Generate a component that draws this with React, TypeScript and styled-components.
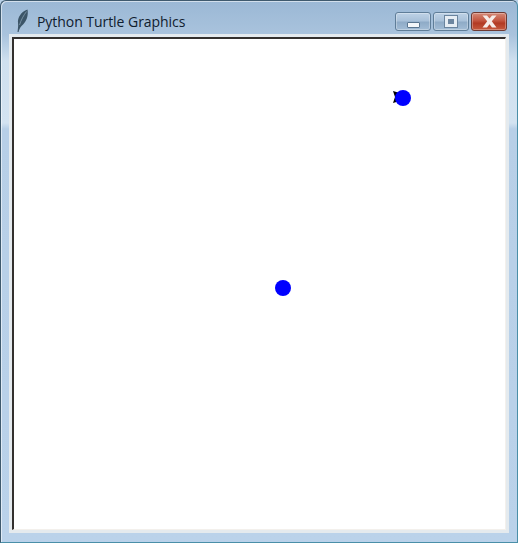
import React from 'react'
import styled, { createGlobalStyle } from 'styled-components'

const GlobalStyle = createGlobalStyle`
  html, body {
    margin: 0;
    padding: 0;
    background: #b9d1e8;
  }
`

const Window = styled.div`
  position: relative;
  box-sizing: border-box;
  width: 518px;
  height: 543px;
  display: flex;
  flex-direction: column;
  overflow: hidden;
  border: 1px solid #3f5a6e;
  border-bottom-color: #4a8fa8;
  border-right-color: #4a8fa8;
  border-radius: 6px 6px 0 0;
  background: linear-gradient(
    to bottom,
    #9bb8d5 0,
    #a9c3dd 34px,
    #cfe0ef 60px,
    #d3e3f1 122px,
    #b7cfe7 128px,
    #bad2ea 100%
  );
  box-shadow: inset 1px 1px 0 rgba(255, 255, 255, 0.55);
`

const TitleBar = styled.div`
  height: 33px;
  flex: none;
  display: flex;
  align-items: flex-start;
  padding: 0 10px 0 14px;
`

const Feather = styled.svg`
  width: 14px;
  height: 24px;
  flex: none;
  margin-top: 8px;
`

const Title = styled.span`
  margin-left: 8px;
  margin-top: 11px;
  flex: 1;
  font-family: 'Open Sans', 'Noto Sans', sans-serif;
  font-size: 14px;
  line-height: 19px;
  letter-spacing: -0.05px;
  color: #10202e;
  white-space: nowrap;
`

const Controls = styled.div`
  display: flex;
  gap: 2px;
  margin-top: 11px;
`

const CtrlButton = styled.div<{ $close?: boolean }>`
  box-sizing: border-box;
  width: 36px;
  height: 19px;
  display: flex;
  align-items: center;
  justify-content: center;
  border: 1px solid ${(p) => (p.$close ? '#6e3a32' : '#5f7d98')};
  border-radius: 3px;
  background: ${(p) =>
    p.$close
      ? 'linear-gradient(to bottom, #d58a78 0, #c3553f 45%, #b23a23 60%, #c65a3e 100%)'
      : 'linear-gradient(to bottom, #bed2e6 0, #a9c1d9 45%, #8fabc7 55%, #a3bdd6 100%)'};
  box-shadow: inset 0 0 0 1px rgba(255, 255, 255, 0.3);
`

const MinGlyph = styled.div`
  box-sizing: border-box;
  width: 13px;
  height: 6px;
  margin-top: 7px;
  background: #f4f7fa;
  border: 1px solid #5a7690;
  border-radius: 1px;
`

const MaxGlyph = styled.div`
  box-sizing: border-box;
  width: 12px;
  height: 11px;
  background: #6d86a0;
  border: 3px solid #e6edf4;
  outline: 1px solid #6a849e;
  outline-offset: 0;
`

const CloseGlyph = styled.svg`
  width: 19px;
  height: 13px;
`

const Client = styled.div`
  flex: 1;
  display: flex;
  margin: 0 8px 9px 8px;
  padding: 3px;
  background: #e4eaee;
  min-height: 0;
`

const Canvas = styled.div`
  position: relative;
  flex: 1;
  background: #ffffff;
  border-top: 2px solid #33302e;
  border-left: 2px solid #33302e;
  border-right: 1px solid #f3f0ec;
  border-bottom: 1px solid #f3f0ec;
`

const Dot = styled.div`
  position: absolute;
  width: 16px;
  height: 16px;
  border-radius: 50%;
  background: #0000ff;
  transform: translate(-50%, -50%);
`

const TurtleHead = styled.svg`
  position: absolute;
  width: 9px;
  height: 12px;
`

export default function App() {
  return (
    <>
      <GlobalStyle />
      <Window>
        <TitleBar>
          <Feather viewBox="0 0 14 24">
            <path
              d="M2.5 23 C3 19 3.4 16.5 3 14 C2.4 9 6 2.5 12.5 0.5 C13.5 6 12 12.5 6.5 17 C5 18.5 4.2 20.5 3.6 23 Z"
              fill="#3c5568"
            />
            <path d="M4.5 16 C6 11 8.5 6.5 11.5 2.5" stroke="#8fa7ba" strokeWidth="0.7" fill="none" />
          </Feather>
          <Title>Python Turtle Graphics</Title>
          <Controls>
            <CtrlButton>
              <MinGlyph />
            </CtrlButton>
            <CtrlButton>
              <MaxGlyph />
            </CtrlButton>
            <CtrlButton $close>
              <CloseGlyph viewBox="0 0 19 13">
                <path
                  d="M2.5 0.5 H7 L9.5 3.5 L12 0.5 H16.5 L11.8 6.3 L16.5 12.5 H12 L9.5 9.2 L7 12.5 H2.5 L7.2 6.3 Z"
                  fill="#f6ece8"
                />
              </CloseGlyph>
            </CtrlButton>
          </Controls>
        </TitleBar>
        <Client>
          <Canvas>
            <Dot style={{ left: 268.5, top: 248.5 }} />
            <TurtleHead viewBox="0 0 9 12" style={{ left: 379, top: 52 }}>
              <path d="M0 0 L5 1.5 L8 2 L8 10 L5 10.5 L0 12 L2 6 Z" fill="#000" />
            </TurtleHead>
            <Dot style={{ left: 388.5, top: 58.5 }} />
          </Canvas>
        </Client>
      </Window>
    </>
  )
}
